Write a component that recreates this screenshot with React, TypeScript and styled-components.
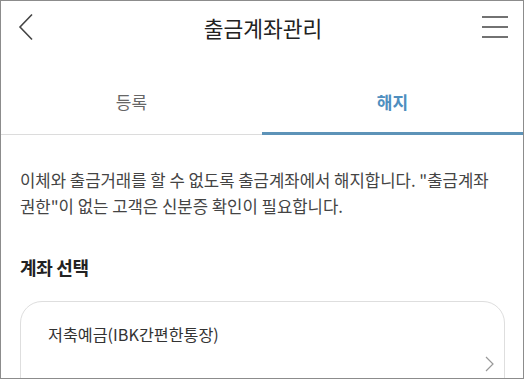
import React, { useState } from "react";
import styled, { createGlobalStyle } from "styled-components";

const GlobalStyle = createGlobalStyle`
  html, body {
    margin: 0;
    padding: 0;
    background: #ffffff;
  }
  body {
    font-family: "Noto Sans CJK KR", "Noto Sans", sans-serif;
    color: #333333;
  }
`;

const Frame = styled.div`
  box-sizing: border-box;
  width: 524px;
  height: 379px;
  border: 1px solid #8c8c8c;
  overflow: hidden;
  background: #ffffff;
`;

const Header = styled.header`
  display: grid;
  grid-template-columns: 48px 1fr 48px;
  align-items: center;
  height: 52px;
  padding: 0 15px 0 17px;
`;

const IconButton = styled.button<{ $end?: boolean }>`
  display: flex;
  align-items: center;
  justify-content: ${(p) => (p.$end ? "flex-end" : "flex-start")};
  background: none;
  border: none;
  padding: 0;
  height: 40px;
  cursor: pointer;
`;

const Title = styled.h1`
  margin: 0;
  text-align: center;
  font-size: 21.5px;
  font-weight: 400;
  color: #222222;
`;

const TabBar = styled.nav`
  display: flex;
  border-bottom: 1px solid #dcdcdc;
`;

const Tab = styled.button<{ $active?: boolean }>`
  flex: 1;
  position: relative;
  background: none;
  border: none;
  padding: 36px 0 19px;
  font-family: inherit;
  font-size: 17px;
  line-height: 26px;
  font-weight: ${(p) => (p.$active ? 700 : 400)};
  color: ${(p) => (p.$active ? "#4f8fbf" : "#666666")};
  cursor: pointer;

  &::after {
    content: "";
    position: absolute;
    left: 0;
    right: 0;
    bottom: -1px;
    height: 3px;
    background: ${(p) => (p.$active ? "#5d93b8" : "transparent")};
  }
`;

const Body = styled.main`
  padding: 32px 18px 0 19px;
`;

const Notice = styled.p`
  margin: 0;
  font-size: 16.7px;
  line-height: 26px;
  color: #444444;
  word-break: keep-all;
`;

const SectionTitle = styled.h2`
  margin: 35px 0 21px;
  font-size: 18px;
  line-height: 26px;
  font-weight: 700;
  color: #222222;
  letter-spacing: -0.3px;
`;

const AccountCard = styled.div`
  border: 1px solid #dedede;
  border-radius: 22px;
  padding: 20px 10px 30px 27px;
  display: flex;
  flex-direction: column;
`;

const AccountName = styled.div`
  font-size: 16.2px;
  line-height: 24px;
  color: #333333;
`;

const ChevronRow = styled.div`
  display: flex;
  justify-content: flex-end;
  margin-top: 10px;
`;

const BackIcon = () => (
  <svg width="16" height="28" viewBox="0 0 16 28" fill="none">
    <path d="M14 1.5 L2 14 L14 26.5" stroke="#444" strokeWidth="1.6" />
  </svg>
);

const MenuIcon = () => (
  <svg width="26" height="22" viewBox="0 0 26 22" fill="none">
    <path d="M0 1h26M0 11h26M0 21h26" stroke="#444" strokeWidth="1.6" />
  </svg>
);

const SmallChevron = () => (
  <svg width="9" height="16" viewBox="0 0 9 16" fill="none">
    <path d="M1 1 L8 8 L1 15" stroke="#999" strokeWidth="1.2" />
  </svg>
);

const App = () => {
  const [tab, setTab] = useState<"register" | "cancel">("cancel");

  return (
    <>
      <GlobalStyle />
      <Frame>
        <Header>
          <IconButton aria-label="뒤로">
            <BackIcon />
          </IconButton>
          <Title>출금계좌관리</Title>
          <IconButton $end aria-label="메뉴">
            <MenuIcon />
          </IconButton>
        </Header>
        <TabBar>
          <Tab $active={tab === "register"} onClick={() => setTab("register")}>
            등록
          </Tab>
          <Tab $active={tab === "cancel"} onClick={() => setTab("cancel")}>
            해지
          </Tab>
        </TabBar>
        <Body>
          <Notice>
            이체와 출금거래를 할 수 없도록 출금계좌에서 해지합니다. "출금계좌
            권한"이 없는 고객은 신분증 확인이 필요합니다.
          </Notice>
          <SectionTitle>계좌 선택</SectionTitle>
          <AccountCard>
            <AccountName>저축예금(IBK간편한통장)</AccountName>
            <ChevronRow>
              <SmallChevron />
            </ChevronRow>
          </AccountCard>
        </Body>
      </Frame>
    </>
  );
};

export default App;
